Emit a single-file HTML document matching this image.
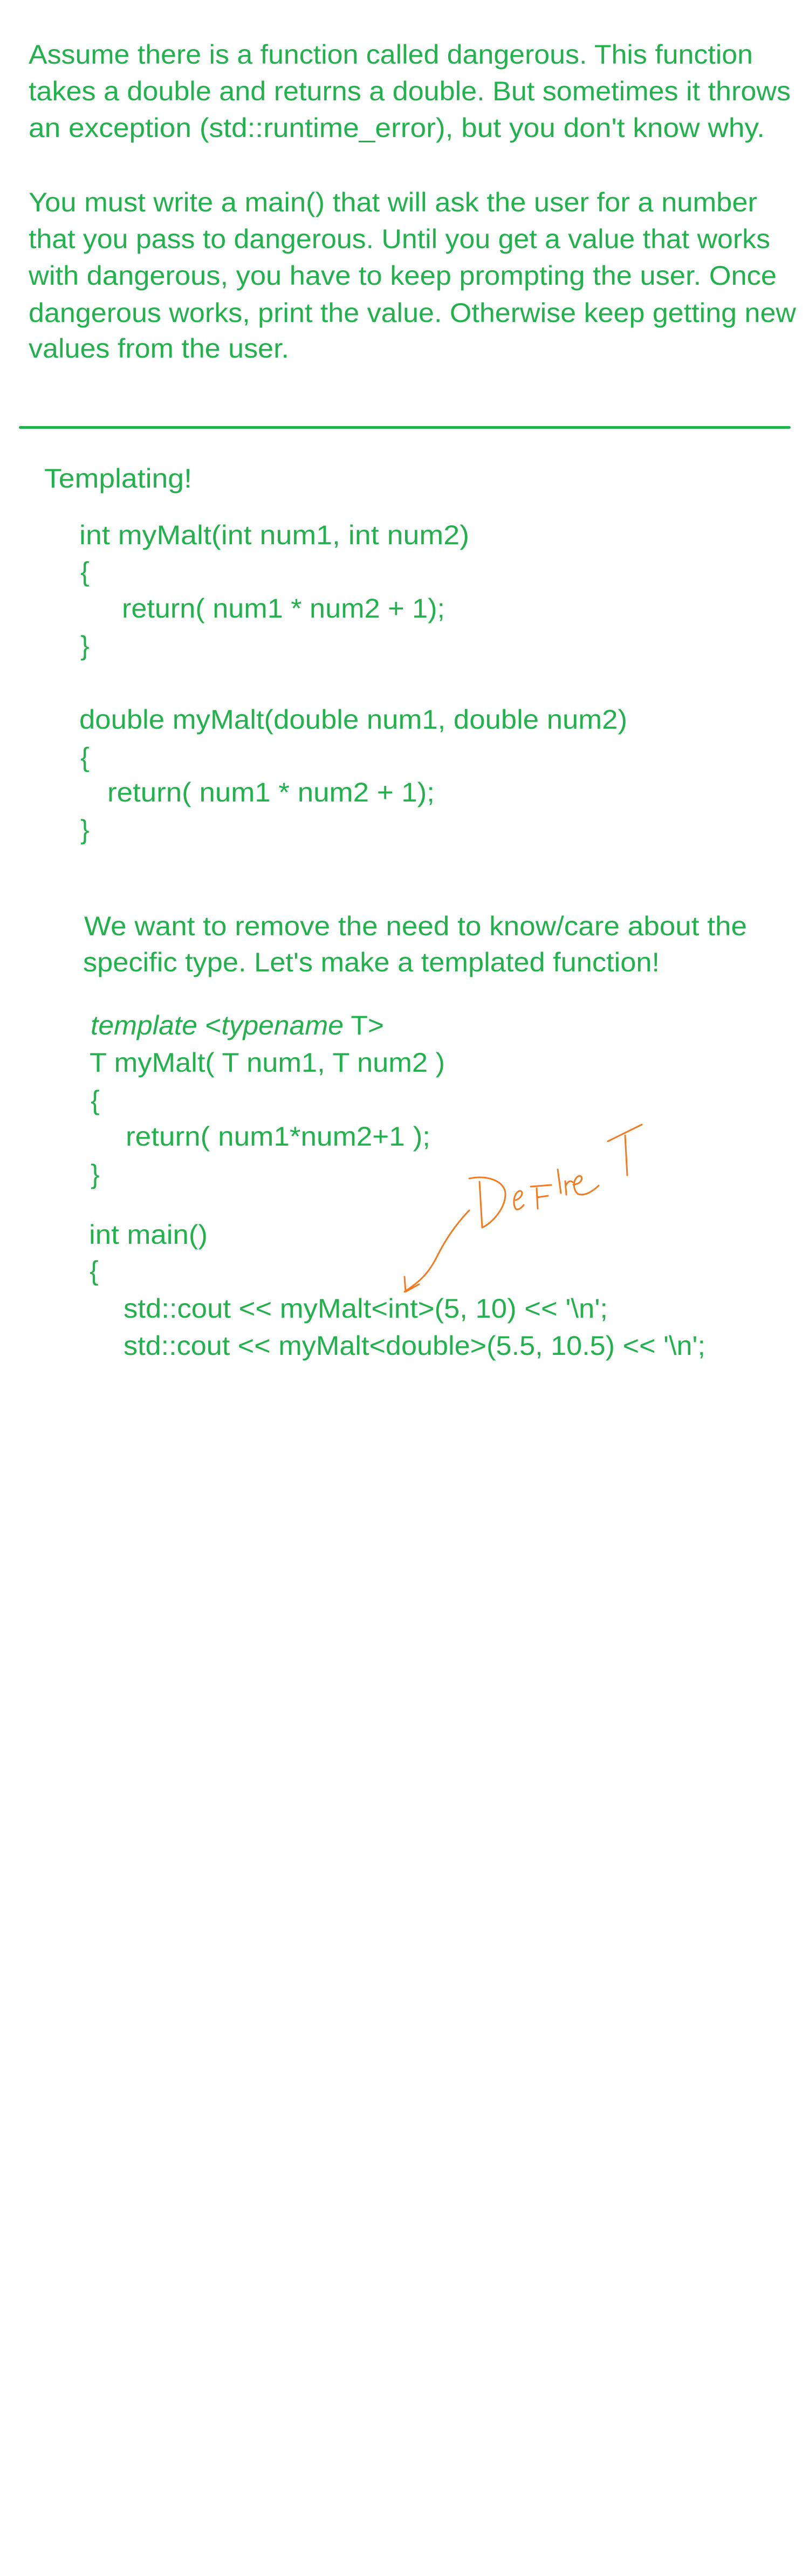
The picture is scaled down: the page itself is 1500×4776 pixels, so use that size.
<!DOCTYPE html>
<html><head><meta charset="utf-8"><style>
html,body{margin:0;padding:0;background:#fff;}
svg{display:block;}
text{font-family:"Liberation Sans",sans-serif;fill:#22b14c;font-size:50px;}
</style></head><body>
<svg width="1500" height="4776" viewBox="0 0 1500 4776" xmlns="http://www.w3.org/2000/svg">
<rect width="1500" height="4776" fill="#fff"/>
<text x="53" y="118" textLength="1343" lengthAdjust="spacingAndGlyphs">Assume there is a function called dangerous.  This function</text>
<text x="53" y="186" textLength="1413" lengthAdjust="spacingAndGlyphs">takes a double and returns a double. But sometimes it throws</text>
<text x="53" y="254" textLength="1365" lengthAdjust="spacingAndGlyphs">an exception (std::runtime_error), but you don't know why.</text>
<text x="53" y="392" textLength="1351" lengthAdjust="spacingAndGlyphs">You must write a main() that will ask the user for a number</text>
<text x="53" y="460" textLength="1375" lengthAdjust="spacingAndGlyphs">that you pass to dangerous. Until you get a value that works</text>
<text x="53" y="528" textLength="1387" lengthAdjust="spacingAndGlyphs">with dangerous, you have to keep prompting the user.  Once</text>
<text x="53" y="597" textLength="1423" lengthAdjust="spacingAndGlyphs">dangerous works, print the value. Otherwise keep getting new</text>
<text x="53" y="663" textLength="483" lengthAdjust="spacingAndGlyphs">values from the user.</text>
<rect x="35" y="790" width="1431" height="5" rx="2.5" fill="#22b14c"/>
<text x="82" y="904" textLength="274" lengthAdjust="spacingAndGlyphs">Templating!</text>

<text x="147" y="1009" textLength="723" lengthAdjust="spacingAndGlyphs">int myMalt(int num1, int num2)</text>
<text x="149" y="1077">{</text>
<text x="226" y="1145" textLength="599" lengthAdjust="spacingAndGlyphs">return( num1 * num2 + 1);</text>
<text x="149" y="1214">}</text>

<text x="147" y="1351" textLength="1016" lengthAdjust="spacingAndGlyphs">double myMalt(double num1, double num2)</text>
<text x="149" y="1421">{</text>
<text x="199" y="1486" textLength="607" lengthAdjust="spacingAndGlyphs">return( num1 * num2 + 1);</text>
<text x="149" y="1555">}</text>

<text x="156" y="1734" textLength="1229" lengthAdjust="spacingAndGlyphs">We want to remove the need to know/care about the</text>
<text x="154" y="1801" textLength="1069" lengthAdjust="spacingAndGlyphs">specific type. Let's make a templated function!</text>

<text x="168" y="1918" textLength="544" lengthAdjust="spacingAndGlyphs"><tspan font-style="italic">template</tspan> &lt;<tspan font-style="italic">typename</tspan> T&gt;</text>
<text x="166" y="1987" textLength="659" lengthAdjust="spacingAndGlyphs">T  myMalt( T num1, T num2 )</text>
<text x="168" y="2057">{</text>
<text x="233" y="2124" textLength="565" lengthAdjust="spacingAndGlyphs">return( num1*num2+1 );</text>
<text x="168" y="2194">}</text>
<text x="165" y="2306" textLength="220" lengthAdjust="spacingAndGlyphs">int main()</text>
<text x="166" y="2373">{</text>
<text x="229" y="2443" textLength="898" lengthAdjust="spacingAndGlyphs">std::cout &lt;&lt; myMalt&lt;int&gt;(5, 10) &lt;&lt; '\n';</text>
<text x="229" y="2512" textLength="1079" lengthAdjust="spacingAndGlyphs">std::cout &lt;&lt; myMalt&lt;double&gt;(5.5, 10.5) &lt;&lt; '\n';</text>

<g fill="none" stroke="#f47a20" stroke-width="3" stroke-linecap="round" stroke-linejoin="round">
<path d="M889 2191 L894 2276"/>
<path d="M870 2185 C905 2178 935 2190 937 2212 C938 2240 912 2268 894 2276"/>
<path d="M956 2225 C968 2222 972 2207 963 2208 C952 2212 950 2235 957 2242 C962 2244 968 2238 971 2234"/>
<path d="M995 2203 L997 2241"/>
<path d="M984 2200 L1022 2197"/>
<path d="M996 2220 L1016 2217"/>
<path d="M1034 2168 L1040 2212"/>
<path d="M1048 2190 L1050 2215 M1049 2198 C1053 2190 1058 2188 1062 2192"/>
<path d="M1063 2196 C1078 2196 1083 2182 1075 2180 C1063 2182 1060 2205 1072 2214 C1085 2218 1100 2208 1110 2198"/>
<path d="M1127 2116 L1190 2085"/>
<path d="M1159 2105 L1163 2179"/>
<path d="M870 2244 C845 2270 825 2300 810 2330 C795 2360 780 2375 750 2395"/>
<path d="M750 2367 L752 2395 L777 2381"/>
</g>
</svg>
</body></html>
